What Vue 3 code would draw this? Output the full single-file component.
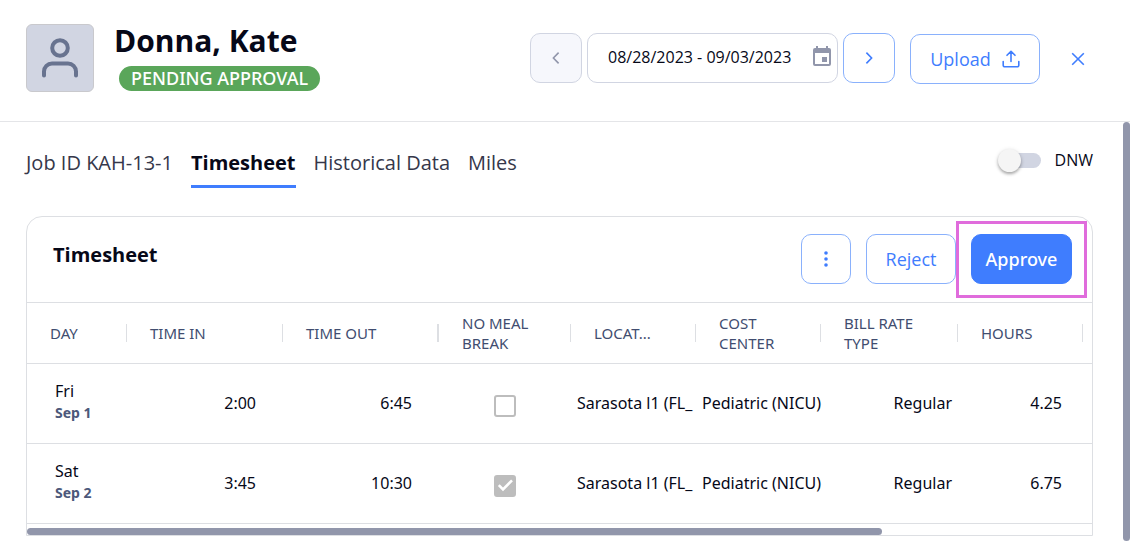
<script setup>
import { ref } from 'vue'

const range = ref('08/28/2023 - 09/03/2023')
const dnw = ref(false)
const tabs = ['Job ID KAH-13-1', 'Timesheet', 'Historical Data', 'Miles']
const activeTab = ref('Timesheet')

const columns = [
  { key: 'day', label: 'DAY' },
  { key: 'in', label: 'TIME IN' },
  { key: 'out', label: 'TIME OUT', thick: true },
  { key: 'meal', label: 'NO MEAL BREAK' },
  { key: 'location', label: 'LOCAT...' },
  { key: 'cost', label: 'COST CENTER' },
  { key: 'rate', label: 'BILL RATE TYPE' },
  { key: 'hours', label: 'HOURS' },
]

const rows = ref([
  { day: 'Fri', date: 'Sep 1', in: '2:00', out: '6:45', noMeal: false, location: 'Sarasota l1 (FL_', cost: 'Pediatric (NICU)', rate: 'Regular', hours: '4.25' },
  { day: 'Sat', date: 'Sep 2', in: '3:45', out: '10:30', noMeal: true, location: 'Sarasota l1 (FL_', cost: 'Pediatric (NICU)', rate: 'Regular', hours: '6.75' },
])
</script>

<template>
  <div class="page">
    <header class="top">
      <div class="avatar">
        <svg width="36" height="40" viewBox="0 0 36 40" fill="none" stroke="#68738f" stroke-width="4" stroke-linecap="round">
          <circle cx="18" cy="10" r="7.8" />
          <path d="M2 37.5V33.5a8 8 0 0 1 8-8H26a8 8 0 0 1 8 8V37.5" />
        </svg>
      </div>
      <div class="person">
        <h1>Donna, Kate</h1>
        <span class="status">PENDING APPROVAL</span>
      </div>
      <div class="period">
        <button class="btn nav off" type="button" aria-label="Previous week" disabled>
          <svg width="8" height="14" viewBox="0 0 8 14" fill="none" stroke="currentColor" stroke-width="1.6"><path d="M6.6 1.6L1.4 7L6.6 12.4" /></svg>
        </button>
        <div class="date">
          <input v-model="range" type="text" aria-label="Date range" />
          <svg width="18" height="20" viewBox="0 0 18 20" fill="#9196ab">
            <path fill-rule="evenodd" d="M2 2H3V0H5V2H13V0H15V2H16a2 2 0 0 1 2 2V18a2 2 0 0 1-2 2H2a2 2 0 0 1-2-2V4a2 2 0 0 1 2-2ZM2 7V18H16V7Z" />
            <rect x="9" y="11" width="5" height="5" />
          </svg>
        </div>
        <button class="btn nav" type="button" aria-label="Next week">
          <svg width="8" height="14" viewBox="0 0 8 14" fill="none" stroke="currentColor" stroke-width="1.6"><path d="M1.4 1.6L6.6 7L1.4 12.4" /></svg>
        </button>
      </div>
      <button class="btn upload" type="button">
        Upload
        <svg width="18" height="18" viewBox="0 0 18 18" fill="none" stroke="currentColor" stroke-width="1.6" stroke-linecap="round" stroke-linejoin="round">
          <path d="M9 11.5V1.5M5 5.3L9 1.3L13 5.3M1.2 11.5V15.2a1.6 1.6 0 0 0 1.6 1.6H15.2a1.6 1.6 0 0 0 1.6-1.6V11.5" />
        </svg>
      </button>
      <button class="close" type="button" aria-label="Close">
        <svg width="14" height="14" viewBox="0 0 14 14" fill="none" stroke="currentColor" stroke-width="1.6"><path d="M1.2 1.2L12.8 12.8M12.8 1.2L1.2 12.8" /></svg>
      </button>
    </header>

    <div class="body">
      <main>
        <div class="bar">
          <nav class="tabs">
            <button v-for="t in tabs" :key="t" type="button" :class="{ active: t === activeTab }" @click="activeTab = t">{{ t }}</button>
          </nav>
          <label class="switch">
            <input v-model="dnw" type="checkbox" role="switch" />
            DNW
          </label>
        </div>

        <section class="card">
          <div class="card-head">
            <h2>Timesheet</h2>
            <div class="actions">
              <button class="btn more" type="button" aria-label="More actions">
                <svg width="4" height="16" viewBox="0 0 4 16" fill="currentColor"><circle cx="2" cy="2" r="1.8" /><circle cx="2" cy="8" r="1.8" /><circle cx="2" cy="14" r="1.8" /></svg>
              </button>
              <button class="btn reject" type="button">Reject</button>
              <div class="highlight">
                <button class="btn approve" type="button">Approve</button>
              </div>
            </div>
          </div>
          <table>
            <colgroup>
              <col v-for="c in columns" :key="c.key" :class="'w-' + c.key" />
              <col />
            </colgroup>
            <thead>
              <tr>
                <th v-for="c in columns" :key="c.key" scope="col">
                  <div class="th" :class="{ thick: c.thick }">{{ c.label }}</div>
                </th>
                <td></td>
              </tr>
            </thead>
            <tbody>
              <tr v-for="r in rows" :key="r.date">
                <td class="day">{{ r.day }}<b>{{ r.date }}</b></td>
                <td class="num">{{ r.in }}</td>
                <td class="num">{{ r.out }}</td>
                <td class="meal"><input v-model="r.noMeal" type="checkbox" :aria-label="'No meal break ' + r.date" disabled /></td>
                <td class="text">{{ r.location }}</td>
                <td class="text">{{ r.cost }}</td>
                <td class="rate">{{ r.rate }}</td>
                <td class="hours">{{ r.hours }}</td>
                <td></td>
              </tr>
            </tbody>
          </table>
          <div class="hscroll"><div></div></div>
        </section>
      </main>
      <div class="vscroll"></div>
    </div>
  </div>
</template>

<style>
body {
  margin: 0;
  background: #fff;
}
</style>

<style scoped>
* {
  box-sizing: border-box;
}
.page {
  min-height: 100vh;
  display: flex;
  flex-direction: column;
  font-family: "Open Sans", "Noto Sans", sans-serif;
  color: #060818;
}
button,
input {
  font: inherit;
  color: inherit;
  margin: 0;
}
.top {
  display: flex;
  align-items: flex-start;
  height: 122px;
  padding: 24px 45px 0 26px;
  border-bottom: 1px solid #e4e5e8;
}
.avatar {
  width: 68px;
  height: 68px;
  border-radius: 6px;
  border: 1px solid #c9c9cd;
  background: #d1d5e2;
  display: flex;
  align-items: center;
  justify-content: center;
}
.person {
  flex: 1;
  margin-left: 20px;
}
h1 {
  margin: 0;
  font-size: 30px;
  line-height: 34px;
  font-weight: 700;
  white-space: nowrap;
}
.status {
  display: block;
  width: fit-content;
  margin: 8px 0 0 5px;
  padding: 0 12px;
  border-radius: 13px;
  background: #5aa65a;
  color: #fff;
  font-family: "Noto Sans", "Open Sans", sans-serif;
  font-size: 18px;
  line-height: 25px;
  font-weight: 500;
  white-space: nowrap;
}
.period {
  display: flex;
  gap: 5px;
  margin-top: 9px;
}
.btn {
  height: 50px;
  display: flex;
  align-items: center;
  justify-content: center;
  border: 1px solid #8ab1fc;
  border-radius: 10px;
  background: #fff;
  color: #3f7dfe;
  font-size: 18px;
  padding: 0;
}
.nav {
  width: 52px;
}
.off {
  border-color: #d1d5e2;
  background: #f6f7fc;
  color: #9196ab;
}
.date {
  width: 251px;
  height: 50px;
  display: flex;
  align-items: center;
  border: 1px solid #d1d5e2;
  border-radius: 10px;
  padding: 0 6px 4px 20px;
}
.date input {
  flex: 1;
  min-width: 0;
  border: 0;
  padding: 2px 0 0;
  outline: 0;
  background: none;
  font-size: 16px;
  line-height: 24px;
}
.upload {
  width: 130px;
  gap: 11px;
  margin: 10px 0 0 15px;
}
.close {
  display: flex;
  margin: 28px 0 0 31px;
  padding: 0;
  border: 0;
  background: none;
  color: #3f7dfe;
}
.body {
  flex: 1;
  display: flex;
}
main {
  flex: 1;
  min-width: 0;
  padding: 24px 30px 15px 26px;
}
.vscroll {
  width: 7px;
  margin-bottom: 10px;
  border-radius: 4px;
  background: #9196ab;
}
.bar {
  display: flex;
  justify-content: space-between;
}
.tabs {
  display: flex;
  gap: 18px;
}
.tabs button {
  height: 42px;
  padding: 0 0 6px;
  border: 0;
  border-bottom: 3px solid transparent;
  background: none;
  font-size: 20px;
  line-height: 32px;
  color: #35374a;
  white-space: nowrap;
}
.tabs .active {
  border-color: #3f7dfe;
  color: #060818;
  font-weight: 700;
}
.switch {
  display: flex;
  align-items: center;
  gap: 14px;
  height: 28px;
  font-size: 16px;
}
.switch input {
  appearance: none;
  position: relative;
  width: 36px;
  height: 15px;
  border-radius: 8px;
  background: #d1d5e2;
}
.switch input::before {
  content: "";
  position: absolute;
  left: -7px;
  top: -4px;
  width: 23px;
  height: 23px;
  border-radius: 50%;
  background: #f5f5f5;
  box-shadow: 0 2px 3px rgba(0, 0, 0, 0.28), 0 1px 5px rgba(0, 0, 0, 0.12);
}
.card {
  margin-top: 28px;
  border: 1px solid #dddfe3;
  border-radius: 16px 16px 0 0;
}
.card-head {
  display: flex;
  justify-content: space-between;
  height: 85px;
  padding: 17px 20px 0 26px;
}
h2 {
  margin: 5px 0 0;
  font-size: 20px;
  line-height: 32px;
  font-weight: 700;
}
.actions {
  display: flex;
  gap: 15px;
}
.more {
  width: 50px;
}
.reject {
  width: 90px;
}
.highlight {
  position: relative;
  height: 50px;
}
.highlight::after {
  content: "";
  position: absolute;
  inset: -13px -15px -14px;
  border: 3px solid #e06cdc;
  pointer-events: none;
}
.approve {
  width: 101px;
  border-color: #3f7dfe;
  background: #3f7dfe;
  color: #fff;
  font-family: "Noto Sans", "Open Sans", sans-serif;
  font-weight: 500;
}
table {
  width: 100%;
  table-layout: fixed;
  border-collapse: separate;
  border-spacing: 0;
  font-family: "Noto Sans", "Open Sans", sans-serif;
  font-size: 16px;
  line-height: 22px;
}
.w-day {
  width: 100px;
}
.w-in,
.w-out {
  width: 156px;
}
.w-meal {
  width: 132px;
}
.w-location,
.w-cost,
.w-hours {
  width: 125px;
}
.w-rate {
  width: 137px;
}
th,
td {
  padding: 0;
  white-space: nowrap;
}
thead th,
thead td {
  height: 62px;
  border-top: 1px solid #dddfe3;
  border-bottom: 1px solid #dddfe3;
}
.th {
  display: flex;
  align-items: center;
  height: 60px;
  padding: 0 20px 0 23px;
  font-size: 15px;
  line-height: 20px;
  font-weight: 400;
  text-align: left;
  white-space: normal;
  color: #414d70;
  background: linear-gradient(#dddfe3, #dddfe3) right center / 1px 18px no-repeat;
}
.thick {
  background-size: 2px 18px;
}
tbody td {
  height: 80px;
  padding-bottom: 2px;
  border-bottom: 1px solid #dddfe3;
}
td.day {
  padding-left: 28px;
  padding-bottom: 4px;
}
.day b {
  display: block;
  font-size: 14px;
  line-height: 22px;
  color: #4c587a;
}
.num {
  text-align: right;
  padding-right: 27px;
}
td.meal {
  padding: 5px 0 0;
}
.meal input {
  appearance: none;
  display: block;
  width: 22px;
  height: 22px;
  margin: 0 auto;
  border: 2px solid #bdbdbd;
  border-radius: 3px;
}
.meal input:checked {
  background: #bdbdbd url("data:image/svg+xml,%3Csvg xmlns='http://www.w3.org/2000/svg' viewBox='0 0 18 18' fill='none' stroke='white' stroke-width='2.6'%3E%3Cpath d='M2.8 8.2L7 12.4L16 3.4'/%3E%3C/svg%3E") center / 18px 18px no-repeat;
}
.text {
  padding-left: 6px;
}
.rate {
  text-align: right;
  padding-right: 6px;
}
.hours {
  text-align: right;
  padding-right: 21px;
}
.hscroll {
  padding: 4px 210px 0 0;
}
.hscroll div {
  height: 7px;
  border-radius: 4px;
  background: #9196ab;
}
</style>
